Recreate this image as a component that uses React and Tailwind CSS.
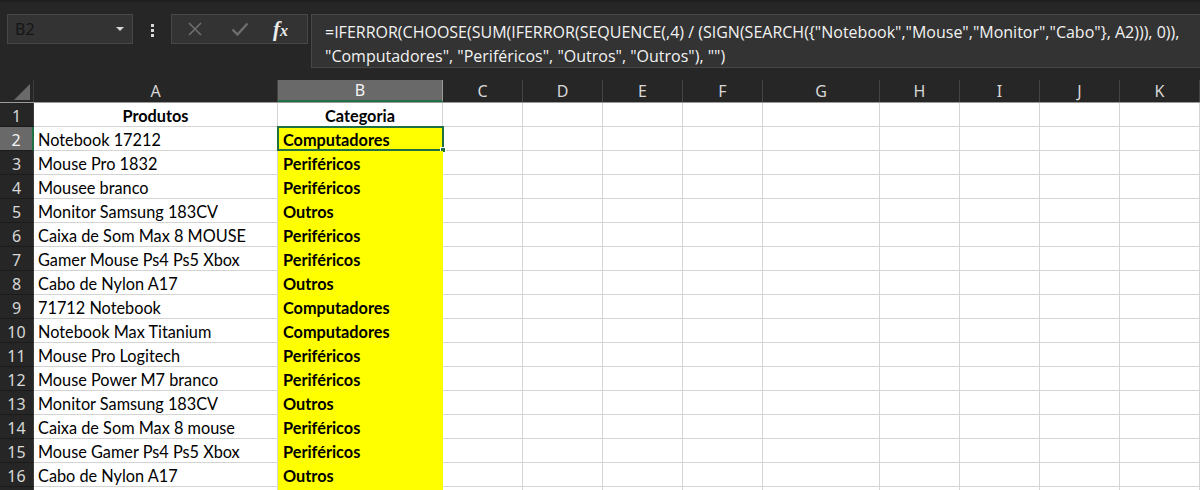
import React from 'react';

const cols = [
  { key: 'A', w: 'w-[244px]' },
  { key: 'B', w: 'w-[165px]' },
  { key: 'C', w: 'w-[80px]' },
  { key: 'D', w: 'w-[80px]' },
  { key: 'E', w: 'w-[80px]' },
  { key: 'F', w: 'w-[80px]' },
  { key: 'G', w: 'w-[117px]' },
  { key: 'H', w: 'w-[80px]' },
  { key: 'I', w: 'w-[80px]' },
  { key: 'J', w: 'w-[80px]' },
  { key: 'K', w: 'w-[80px]' },
];

const rows = [
  ['Notebook 17212', 'Computadores'],
  ['Mouse Pro 1832', 'Periféricos'],
  ['Mousee branco', 'Periféricos'],
  ['Monitor Samsung 183CV', 'Outros'],
  ['Caixa de Som Max 8 MOUSE', 'Periféricos'],
  ['Gamer Mouse Ps4 Ps5 Xbox', 'Periféricos'],
  ['Cabo de Nylon A17', 'Outros'],
  ['71712 Notebook', 'Computadores'],
  ['Notebook Max Titanium', 'Computadores'],
  ['Mouse Pro Logitech', 'Periféricos'],
  ['Mouse Power M7 branco', 'Periféricos'],
  ['Monitor Samsung 183CV', 'Outros'],
  ['Caixa de Som Max 8 mouse', 'Periféricos'],
  ['Mouse Gamer Ps4 Ps5 Xbox', 'Periféricos'],
  ['Cabo de Nylon A17', 'Outros'],
];

const cellFont = { fontFamily: 'Lato, "Open Sans", sans-serif' };

function FormulaBar() {
  return (
    <div className="flex h-[80px] bg-[#262626] border-t-2 border-[#1e1e1e]">
      <div className="flex h-[30px] mt-[12px] ml-[7px] w-[126px] items-center justify-between bg-[#333333] border border-[#474747] pl-[7px] pr-[8px]">
        <span className="text-[16px] text-[#151515]" style={{ fontFamily: '"Noto Sans", sans-serif' }}>B2</span>
        <svg width="8" height="5" viewBox="0 0 8 5"><path d="M0 0 L8 0 L4 4 Z" fill="#d8d8d8" /></svg>
      </div>
      <div className="flex flex-col gap-[2px] mt-[22px] ml-[18px] mr-[17px]">
        <span className="w-[3px] h-[3px] bg-[#d8d8d8]" />
        <span className="w-[3px] h-[3px] bg-[#d8d8d8]" />
        <span className="w-[3px] h-[3px] bg-[#d8d8d8]" />
      </div>
      <div className="flex h-[30px] mt-[12px] w-[137px] items-center bg-[#333333] border border-[#474747]">
        <svg className="ml-[15px]" width="16" height="16" viewBox="0 0 16 16">
          <path d="M2 2 L14 14 M14 2 L2 14" stroke="#6e6e6e" strokeWidth="1.6" />
        </svg>
        <svg className="ml-[28px]" width="18" height="16" viewBox="0 0 18 16">
          <path d="M1.5 8.5 L6.5 13.5 L16.5 2.5" stroke="#6e6e6e" strokeWidth="2.4" fill="none" />
        </svg>
        <span className="ml-[24px] text-[#ececec] italic font-bold text-[21px] leading-none" style={{ fontFamily: '"Liberation Serif", serif' }}>
          f<span className="text-[16px]">x</span>
        </span>
      </div>
      <div
        className="flex-1 h-[54px] mt-[12px] ml-[3px] bg-[#333333] border border-[#474747] border-r-0 pl-[13px] pt-[5px] text-[16px] leading-[24px] text-[#f2f2f2]"
        style={{ fontFamily: '"Open Sans", sans-serif' }}
      >
        <div className="whitespace-nowrap">=IFERROR(CHOOSE(SUM(IFERROR(SEQUENCE(,4) / (SIGN(SEARCH({"{"}"Notebook","Mouse","Monitor","Cabo"{"}"}, A2))), 0)),</div>
        <div className="whitespace-nowrap">"Computadores", "Periféricos", "Outros", "Outros"), "")</div>
      </div>
    </div>
  );
}

function HeaderRow() {
  return (
    <div className="flex h-[23px] bg-[#262626] border-b border-[#9a9a9a]">
      <div className="w-[34px] shrink-0 flex items-end justify-end pb-[2px] pr-[3px] border-r border-[#3c3c3c]">
        <svg width="16" height="16" viewBox="0 0 16 16"><path d="M16 0 L16 16 L0 16 Z" fill="#6a6a6a" /></svg>
      </div>
      {cols.map((c) => (
        <div
          key={c.key}
          className={`${c.w} shrink-0 flex items-center justify-center text-[16px] border-r ${
            c.key === 'B'
              ? 'bg-[#696969] text-[#f4f4f4] border-b-2 border-b-[#1f7145] border-r-[#9a9a9a]'
              : 'text-[#d8d8d8] border-[#444444]'
          }`}
          style={{ fontFamily: '"Noto Sans", sans-serif' }}
        >
          {c.key}
        </div>
      ))}
    </div>
  );
}

function Row({ n, a, b, header }) {
  const active = n === 2;
  return (
    <div className="flex h-[24px]">
      <div
        className={`w-[34px] shrink-0 flex items-center justify-center pt-[2px] text-[16px] border-b border-[#1b1b1b] ${
          active ? 'bg-[#696969] text-[#f4f4f4] border-r-2 border-r-[#1f7145]' : 'bg-[#262626] text-[#d8d8d8] border-r border-r-[#3c3c3c]'
        }`}
        style={{ fontFamily: '"Noto Sans", sans-serif' }}
      >
        {n}
      </div>
      <div
        className={`w-[244px] shrink-0 bg-white border-b border-r border-[#d4d4d4] flex items-center pt-[3px] text-[16.3px] text-black ${
          header ? 'justify-center font-bold' : 'pl-[4px]'
        }`}
        style={cellFont}
      >
        {a}
      </div>
      <div
        className={`relative w-[165px] shrink-0 flex items-center pt-[3px] text-[16.3px] font-bold text-black ${
          header ? 'bg-white justify-center border-b border-r border-[#d4d4d4]' : 'bg-[#ffff00] pl-[5px] border-b border-r border-[#ffff00]'
        }`}
        style={cellFont}
      >
        {b}
        {active && (
          <>
            <div className="absolute -left-px -top-px -right-[2px] -bottom-px border-2 border-[#1f7145]" />
            <div className="absolute -right-[4px] -bottom-[3px] w-[6px] h-[6px] bg-[#1f7145] border border-white" />
          </>
        )}
      </div>
      {cols.slice(2).map((c) => (
        <div key={c.key} className={`${c.w} shrink-0 bg-white border-b border-r border-[#d4d4d4]`} />
      ))}
    </div>
  );
}

export default function App() {
  return (
    <div className="w-[1200px] h-[490px] overflow-hidden bg-white">
      <FormulaBar />
      <HeaderRow />
      <Row n={1} a="Produtos" b="Categoria" header />
      {rows.map((r, i) => (
        <Row key={i} n={i + 2} a={r[0]} b={r[1]} />
      ))}
      <Row n="" a="" b="" />
    </div>
  );
}
